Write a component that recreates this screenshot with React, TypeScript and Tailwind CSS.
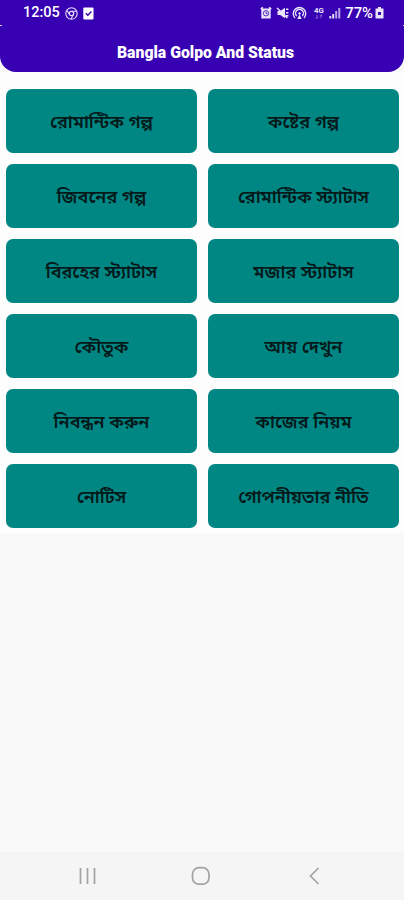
import React from "react";

const labels: string[] = [
  "রোমান্টিক গল্প",
  "কষ্টের গল্প",
  "জিবনের গল্প",
  "রোমান্টিক স্ট্যাটাস",
  "বিরহের স্ট্যাটাস",
  "মজার স্ট্যাটাস",
  "কৌতুক",
  "আয় দেখুন",
  "নিবন্ধন করুন",
  "কাজের নিয়ম",
  "নোটিস",
  "গোপনীয়তার নীতি",
];

function LeftIcons() {
  return (
    <>
      <svg className="ml-[5px] h-[13px] w-[13px]" viewBox="0 0 13 13" fill="none" stroke="#e3dcf8">
        <circle cx="6.5" cy="6.5" r="5.7" strokeWidth="1.1" />
        <circle cx="6.5" cy="6.5" r="2.2" strokeWidth="1.2" />
        <path d="M6.5 4.3H11.5M4.6 7.6L2 3.5M8.4 7.6L6 12" strokeWidth="1.1" />
      </svg>
      <svg className="ml-[5px] h-[13px] w-[11px]" viewBox="0 0 11 13">
        <rect x="0.3" y="0.5" width="10.2" height="12" rx="1" fill="#fff" />
        <path d="M2.8 6.3l2 2 3.6-3.8" fill="none" stroke="#3700b3" strokeWidth="1.4" />
      </svg>
    </>
  );
}

function RightIcons() {
  return (
    <svg className="h-[14px] w-[84px]" viewBox="0 0 84 14" fill="none" stroke="#e9e4fa">
      <path d="M0.8 3L3 1.3M11.2 3L9 1.3" strokeWidth="1.6" />
      <path d="M1.3 2.5h9.4v10H1.3z" fill="#e9e4fa" stroke="none" />
      <circle cx="6" cy="7.3" r="2.7" stroke="#3700b3" strokeWidth="0.8" />
      <path d="M6 5.6v2h1.6" stroke="#3700b3" strokeWidth="0.8" />
      <path d="M17.5 5h2.8L25 1.8v10.4L20.3 9h-2.8z" fill="#e9e4fa" stroke="none" />
      <path d="M17 2l10.5 10M26 3.2h2.4M26 6.8h2.4M26 9.8h2.4" strokeWidth="1.5" />
      <path d="M35 12A6.2 6.2 0 1 1 44 12M36.7 10A3.9 3.9 0 1 1 42.3 10" strokeWidth="1.4" />
      <circle cx="39.5" cy="7.5" r="1.2" fill="#e9e4fa" stroke="none" />
      <path d="M37.3 13l2.2-4.4 2.2 4.4z" fill="#e9e4fa" stroke="none" />
      <text x="54" y="6.8" fill="#e9e4fa" stroke="none" fontSize="7.8" fontWeight="700" fontFamily="Roboto, sans-serif">4G</text>
      <path d="M57 8.8v3.5M55.7 11l1.3 1.4 1.3-1.4M61 12.4V8.9M59.7 10.2L61 8.8l1.3 1.4" stroke="#9277d8" strokeWidth="0.8" />
      <path d="M70.3 12.4V10M73.2 12.4V8" strokeWidth="1.9" />
      <path d="M76.2 12.4V5M79.3 12.4V2" stroke="#b7a5e8" strokeWidth="2" />
    </svg>
  );
}

export default function App() {
  return (
    <div className="flex h-[900px] w-[404px] flex-col overflow-hidden bg-[#f9f9f9] font-[Roboto,'Liberation_Sans',sans-serif]">
      <header className="h-[72px] shrink-0 rounded-b-[16px] bg-[#3700b3] text-white">
        <div className="flex h-[25px] items-center pl-[23px] pr-[20px] pt-px">
          <span className="pt-px text-[14.5px] font-medium leading-none">12:05</span>
          <LeftIcons />
          <div className="ml-auto flex items-center">
            <RightIcons />
            <span className="ml-px text-[14.8px] font-medium leading-none">77%</span>
            <svg className="ml-[2px] h-[13px] w-[9px]" viewBox="0 0 9 13">
              <path d="M3 1h3v1.5h2.5v10h-8v-10H3z" fill="#e9e4fa" />
              <path d="M3 6h3v3H3z" fill="#3700b3" />
            </svg>
          </div>
        </div>
        <div className="flex h-px justify-between">
          <span className="w-[2px] bg-[#d9d0f3]" />
          <span className="w-px bg-[#d9d0f3]" />
        </div>
        <h1 className="flex h-[52px] items-center justify-center pl-[7px] pt-[2px] text-[15.8px] font-black leading-none">
          Bangla Golpo And Status
        </h1>
      </header>
      <main className="grow">
        <div className="grid h-[461px] grid-cols-2 grid-rows-6 gap-x-[11px] gap-y-[11px] bg-[#fdfdfd] pb-[4.5px] pl-[6px] pr-[5px] pt-[16.5px]">
          {labels.map((label) => (
            <button
              key={label}
              className="flex items-center justify-center rounded-[7px] bg-[#008784] pt-[4px] font-['Noto_Sans_Bengali','Noto_Sans',sans-serif] text-[18px] font-semibold leading-none text-[#04191a]"
            >
              {label}
            </button>
          ))}
        </div>
      </main>
      <nav className="flex h-[48px] shrink-0 items-center bg-[#f5f5f5]">
        <svg className="h-[20px] w-full" viewBox="0 0 404 20" fill="none" stroke="#a3a3a3" strokeWidth="1.7">
          <path d="M80.5 2v16M87.5 2v16M94.5 2v16" />
          <rect x="192.5" y="1.7" width="16.5" height="16.5" rx="6.5" />
          <path d="M318.5 2l-8 8 8 8" />
        </svg>
      </nav>
    </div>
  );
}
